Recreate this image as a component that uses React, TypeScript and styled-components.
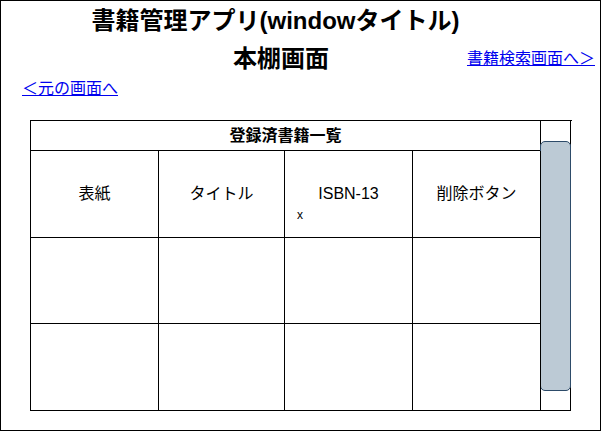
import styled, { createGlobalStyle } from 'styled-components';

const GlobalStyle = createGlobalStyle`
  html, body {
    margin: 0;
    padding: 0;
    background: #fff;
  }
  body {
    font-family: "Liberation Sans", "Noto Sans CJK JP", sans-serif;
    color: #000;
  }
`;

const Frame = styled.div`
  width: 601px;
  height: 431px;
  box-sizing: border-box;
  border: 1px solid #000;
  display: flex;
  flex-direction: column;
`;

const WindowTitle = styled.h1`
  margin: 6px 0 0;
  padding-right: 50px;
  font-size: 24px;
  line-height: 28px;
  font-weight: bold;
  text-align: center;
`;

const HeadingRow = styled.div`
  display: flex;
  align-items: center;
  margin-top: 10px;
  padding-right: 5px;
`;

const ScreenTitle = styled.h2`
  flex: 1;
  margin: 0;
  padding-left: 94px;
  font-size: 24px;
  line-height: 28px;
  font-weight: bold;
  text-align: center;
`;

const NavLink = styled.a`
  color: #0000ee;
  text-decoration: underline;
  font-size: 16px;
  line-height: 20px;
  cursor: pointer;
`;

const BackRow = styled.div`
  margin-top: 6px;
  padding-left: 21px;
`;

const Grid = styled.div`
  position: relative;
  display: grid;
  grid-template-columns: 128px 126px 128px 128px 30px;
  grid-template-rows: 30px 87px 86px 87px;
  width: 541px;
  margin: 21px 0 0 29px;
  border-top: 1px solid #000;
  border-left: 1px solid #000;
`;

const Cell = styled.div<{ $header?: boolean }>`
  position: relative;
  box-sizing: content-box;
  border-right: 1px solid #000;
  border-bottom: 1px solid #000;
  display: flex;
  align-items: center;
  justify-content: center;
  font-size: 16px;
  line-height: 20px;
  font-weight: ${(p) => (p.$header ? 'bold' : 'normal')};
  ${(p) => (p.$header ? 'grid-column: 1 / 5;' : '')}
`;

const ScrollCell = styled.div`
  position: relative;
  grid-column: 5;
  grid-row: 1 / 5;
  border-right: 1px solid #000;
  border-bottom: 1px solid #000;
`;

const Thumb = styled.div`
  position: absolute;
  left: -1px;
  top: 20px;
  width: 31px;
  height: 250px;
  box-sizing: border-box;
  background: #bccad5;
  border: 1px solid #2d4b69;
  border-radius: 5px;
`;

const Mark = styled.span`
  position: absolute;
  left: 12px;
  top: 57px;
  font-size: 12px;
  line-height: 14px;
`;

const headers = ['表紙', 'タイトル', 'ISBN-13', '削除ボタン'];

const App = () => {
  return (
    <>
      <GlobalStyle />
      <Frame>
        <WindowTitle>書籍管理アプリ(windowタイトル)</WindowTitle>
        <HeadingRow>
          <ScreenTitle>本棚画面</ScreenTitle>
          <NavLink>書籍検索画面へ＞</NavLink>
        </HeadingRow>
        <BackRow>
          <NavLink>＜元の画面へ</NavLink>
        </BackRow>
        <Grid>
          <Cell $header>登録済書籍一覧</Cell>
          <ScrollCell>
            <Thumb />
          </ScrollCell>
          {headers.map((h) => (
            <Cell key={h}>
              {h}
              {h === 'ISBN-13' && <Mark>x</Mark>}
            </Cell>
          ))}
          {Array.from({ length: 8 }).map((_, i) => (
            <Cell key={i} />
          ))}
        </Grid>
      </Frame>
    </>
  );
};

export default App;
